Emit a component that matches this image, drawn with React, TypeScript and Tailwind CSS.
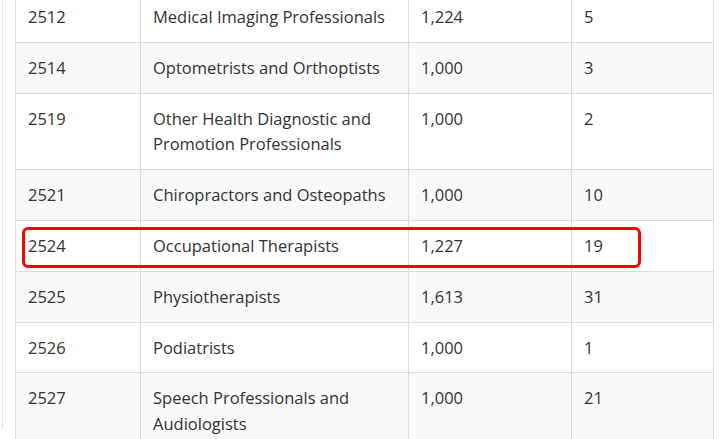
const ROWS = [
  { code: '2512', name: 'Medical Imaging Professionals', min: '1,224', count: '5' },
  { code: '2514', name: 'Optometrists and Orthoptists', min: '1,000', count: '3' },
  { code: '2519', name: 'Other Health Diagnostic and Promotion Professionals', min: '1,000', count: '2' },
  { code: '2521', name: 'Chiropractors and Osteopaths', min: '1,000', count: '10' },
  { code: '2524', name: 'Occupational Therapists', min: '1,227', count: '19', highlight: true },
  { code: '2525', name: 'Physiotherapists', min: '1,613', count: '31' },
  { code: '2526', name: 'Podiatrists', min: '1,000', count: '1' },
  { code: '2527', name: 'Speech Professionals and Audiologists', min: '1,000', count: '21' },
];

export default function App() {
  return (
    <div className="h-[439px] w-[720px] overflow-hidden bg-white">
      <div className="ml-[2px] mr-[7px] h-full border-l border-[#e3e3e3] pl-[12px]">
        <table
          className="-mt-[9px] w-[698px] table-fixed border-collapse text-[16.5px] leading-[25.8px] text-[#333]"
          style={{ fontFamily: '"Open Sans", "Noto Sans", sans-serif' }}
        >
          <colgroup>
            <col className="w-[125px]" />
            <col className="w-[268px]" />
            <col className="w-[163px]" />
            <col className="w-[142px]" />
          </colgroup>
          <tbody>
            {ROWS.map((row, i) => (
              <tr key={row.code} className={i % 2 === 1 ? 'bg-[#f9f9f9]' : 'bg-white'}>
                <td className="relative border border-[#dcdcdc] px-3 py-3 align-top">
                  {row.code}
                  {row.highlight && (
                    <div className="absolute left-[6px] top-[6px] h-[41px] w-[619px] rounded-[6px] border-[3px] border-[#ff0000]" />
                  )}
                </td>
                <td className="border border-[#dcdcdc] px-3 py-3 align-top">{row.name}</td>
                <td className="border border-[#dcdcdc] px-3 py-3 align-top">{row.min}</td>
                <td className="border border-[#dcdcdc] px-3 py-3 align-top">{row.count}</td>
              </tr>
            ))}
          </tbody>
        </table>
      </div>
    </div>
  );
}
